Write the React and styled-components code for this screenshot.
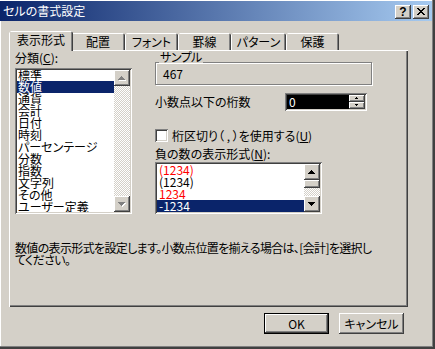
import React from 'react';
import styled, { createGlobalStyle, css } from 'styled-components';

const FACE = '#d4d0c8';
const SHADOW = '#808080';
const DARK = '#404040';
const HILITE = '#ffffff';
const NAVY = '#0a246a';

const raised = css`
  box-shadow: inset -1px -1px ${DARK}, inset 1px 1px ${HILITE},
    inset -2px -2px ${SHADOW}, inset 2px 2px ${FACE};
`;
const sunken = css`
  box-shadow: inset 1px 1px ${SHADOW}, inset -1px -1px ${HILITE},
    inset 2px 2px ${DARK}, inset -2px -2px ${FACE};
`;

const Global = createGlobalStyle`
  html, body { margin: 0; padding: 0; background: ${FACE}; }
  body {
    font-family: "Noto Sans CJK JP", "Noto Sans", sans-serif;
    font-size: 12px;
    line-height: 12px;
    font-feature-settings: "palt";
    color: #000;
  }
  * { box-sizing: border-box; }
  u { text-underline-offset: 1px; }
`;

const Window = styled.div`
  width: 435px;
  height: 349px;
  background: ${FACE};
  display: flex;
  flex-direction: column;
  padding: 1px 3px 0 0;
  box-shadow: inset -2px -2px ${DARK}, inset -3px -3px ${SHADOW}, inset 1px 1px ${HILITE};
`;

const TitleBar = styled.div`
  height: 20px;
  display: flex;
  align-items: center;
  padding: 0 3px 0 3px;
  background: linear-gradient(to right, #0a246a, #a6caf0);
  color: #fff;
`;

const Title = styled.div`
  flex: 1;
  font-size: 12px;
  line-height: 12px;
`;

const CapButton = styled.div`
  width: 16px;
  height: 14px;
  background: ${FACE};
  ${raised};
  display: flex;
  align-items: center;
  justify-content: center;
  margin-left: ${(p) => (p.$gap ? 2 : 0)}px;
  margin-top: 1px;
  color: #000;
  font-family: "Liberation Sans", Arial, sans-serif;
  font-weight: bold;
  font-size: 12px;
  line-height: 12px;
`;

const Body = styled.div`
  flex: 1;
  display: flex;
  flex-direction: column;
  padding: 10px 24px 0 9px;
`;

const TabRow = styled.div`
  display: flex;
  align-items: flex-end;
  height: 20px;
  margin-bottom: -1px;
  padding-left: 2px;
  position: relative;
  z-index: 1;
`;

const Tab = styled.div`
  width: ${(p) => p.$w}px;
  height: ${(p) => (p.$active ? 20 : 17)}px;
  margin: 0 ${(p) => (p.$active ? -2 : 0)}px ${(p) => (p.$active ? 0 : 1)}px;
  padding-bottom: ${(p) => (p.$active ? 2 : 0)}px;
  flex-shrink: 0;
  background: ${FACE};
  display: flex;
  align-items: center;
  justify-content: center;
  box-shadow: inset 1px 1px ${HILITE}, inset -1px 0 ${DARK}, inset -2px 0 ${SHADOW};
  clip-path: polygon(0 2px, 2px 0, calc(100% - 2px) 0, 100% 2px, 100% 100%, 0 100%);
  position: relative;
  z-index: ${(p) => (p.$active ? 2 : 1)};
`;

const Panel = styled.div`
  height: 257px;
  background: ${FACE};
  box-shadow: inset 1px 1px ${HILITE}, inset -1px -1px ${DARK}, inset -2px -2px ${SHADOW};
  padding: 2px 6px;
  display: flex;
  flex-direction: column;
`;

const Top = styled.div`
  display: flex;
`;

const LeftCol = styled.div`
  width: 117px;
  display: flex;
  flex-direction: column;
`;

const RightCol = styled.div`
  margin-left: 23px;
  width: 217px;
  display: flex;
  flex-direction: column;
`;

const Label = styled.div`
  height: 12px;
  line-height: 12px;
  white-space: nowrap;
  margin-top: ${(p) => p.$mt || 0}px;
`;

const ListBox = styled.div`
  width: ${(p) => p.$w}px;
  height: ${(p) => p.$h}px;
  margin-top: ${(p) => p.$mt || 0}px;
  background: #fff;
  ${sunken};
  padding: 2px;
  display: flex;
`;

const Items = styled.div`
  flex: 1;
  overflow: hidden;
`;

const ItemsInner = styled.div`
  margin-top: ${(p) => p.$offset || 0}px;
`;

const Item = styled.div`
  height: 12px;
  line-height: 12px;
  padding-left: ${(p) => p.$pad}px;
  white-space: nowrap;
  background: ${(p) => (p.$selected ? NAVY : 'transparent')};
  color: ${(p) => (p.$selected ? '#fff' : p.$color || '#000')};
`;

const ScrollBar = styled.div`
  width: 16px;
  flex-shrink: 0;
  display: flex;
  flex-direction: column;
`;

const ScrollBtn = styled.div`
  width: 16px;
  height: 16px;
  flex-shrink: 0;
  background: ${FACE};
  ${raised};
  display: flex;
  align-items: center;
  justify-content: center;
`;

const Track = styled.div`
  flex: 1;
  background: repeating-conic-gradient(${FACE} 0 25%, #ffffff 0 50%) 0 0 / 2px 2px;
`;

const Thumb = styled.div`
  height: 8px;
  flex-shrink: 0;
  background: ${FACE};
  ${raised};
`;

const Group = styled.div`
  position: relative;
  margin-top: 10px;
  height: 23px;
  border: 1px solid ${SHADOW};
  box-shadow: inset 1px 1px ${HILITE}, 1px 1px ${HILITE};
  padding: 5px 0 0 7px;
  line-height: 12px;
`;

const GroupLabel = styled.span`
  position: absolute;
  left: 3px;
  top: -12px;
  padding: 0 1px;
  background: ${FACE};
  line-height: 12px;
  letter-spacing: -0.5px;
`;

const SpinRow = styled.div`
  display: flex;
  align-items: center;
  margin-top: 8px;
  height: 18px;
`;

const SpinLabel = styled.div`
  width: 130px;
  white-space: nowrap;
`;

const Spin = styled.div`
  width: 82px;
  height: 18px;
  ${sunken};
  background: ${FACE};
  padding: 2px;
  display: flex;
`;

const SpinField = styled.div`
  flex: 1;
  background: #000;
  color: #fff;
  padding-left: 2px;
  line-height: 14px;
`;

const SpinBtns = styled.div`
  width: 16px;
  display: flex;
  flex-direction: column;
`;

const SpinBtn = styled.div`
  flex: 1;
  background: ${FACE};
  ${raised};
  display: flex;
  align-items: center;
  justify-content: center;
`;

const CheckRow = styled.div`
  display: flex;
  align-items: center;
  margin-top: 18px;
  height: 13px;
`;

const CheckBox = styled.div`
  width: 13px;
  height: 13px;
  background: #fff;
  ${sunken};
  margin-right: 4px;
  flex-shrink: 0;
`;

const Description = styled.div`
  margin-top: 28px;
  line-height: 12px;
  white-space: nowrap;
  letter-spacing: -0.65px;
`;

const ButtonRow = styled.div`
  display: flex;
  justify-content: flex-end;
  gap: 10px;
  padding: 6px 4px 0 0;
`;

const Button = styled.div`
  width: 65px;
  height: 21px;
  background: ${FACE};
  display: flex;
  align-items: center;
  justify-content: center;
  ${(p) =>
    p.$default
      ? css`
          box-shadow: inset 0 0 0 1px #000, inset -2px -2px ${DARK}, inset 2px 2px ${HILITE},
            inset -3px -3px ${SHADOW}, inset 3px 3px ${FACE};
        `
      : raised};
`;

const Arrow = ({ dir = 'up', size = 4, disabled }) => {
  const w = size * 2 - 1;
  const rects = [];
  for (let i = 0; i < size; i++) {
    const y = dir === 'up' ? i : size - 1 - i;
    rects.push(<rect key={i} x={size - 1 - i} y={y} width={2 * i + 1} height={1} />);
  }
  return (
    <svg width={w + 1} height={size + 1} viewBox={`0 0 ${w + 1} ${size + 1}`} shapeRendering="crispEdges">
      {disabled && (
        <g fill="#fff" transform="translate(1,1)">
          {rects}
        </g>
      )}
      <g fill={disabled ? SHADOW : '#000'}>{rects}</g>
    </svg>
  );
};

const CloseGlyph = () => {
  const rows = [
    [0, 2, 6, 2],
    [1, 2, 5, 2],
    [2, 4],
    [3, 2],
    [2, 4],
    [1, 2, 5, 2],
    [0, 2, 6, 2],
  ];
  const rects = [];
  rows.forEach((r, y) => {
    for (let i = 0; i < r.length; i += 2) {
      rects.push(<rect key={`${y}-${i}`} x={r[i]} y={y} width={r[i + 1]} height={1} />);
    }
  });
  return (
    <svg width="8" height="7" viewBox="0 0 8 7" shapeRendering="crispEdges" fill="#000">
      {rects}
    </svg>
  );
};

const categories = [
  '標準',
  '数値',
  '通貨',
  '会計',
  '日付',
  '時刻',
  'パーセンテージ',
  '分数',
  '指数',
  '文字列',
  'その他',
  'ユーザー定義',
];

const negatives = [
  { t: '(1234)', c: '#ff0000' },
  { t: '(1234)', c: '#000' },
  { t: '1234', c: '#ff0000' },
  { t: '-1234', c: '#000', sel: true },
];

const tabs = [
  { t: '表示形式', w: 64, active: true },
  { t: '配置', w: 54 },
  { t: 'フォント', w: 53 },
  { t: '罫線', w: 53 },
  { t: 'パターン', w: 55 },
  { t: '保護', w: 53 },
];

export default function App() {
  return (
    <>
      <Global />
      <Window>
        <TitleBar>
          <Title>セルの書式設定</Title>
          <CapButton>?</CapButton>
          <CapButton $gap>
            <CloseGlyph />
          </CapButton>
        </TitleBar>
        <Body>
          <TabRow>
            {tabs.map((t) => (
              <Tab key={t.t} $w={t.w} $active={t.active}>
                {t.t}
              </Tab>
            ))}
          </TabRow>
          <Panel>
            <Top>
              <LeftCol>
                <Label>
                  分類(<u>C</u>):
                </Label>
                <ListBox $w={117} $h={146} $mt={4}>
                  <Items>
                    <ItemsInner $offset={-1}>
                      {categories.map((c, i) => (
                        <Item key={c} $pad={1} $selected={i === 1}>
                          {c}
                        </Item>
                      ))}
                    </ItemsInner>
                  </Items>
                  <ScrollBar>
                    <ScrollBtn>
                      <Arrow dir="up" disabled />
                    </ScrollBtn>
                    <Track />
                    <ScrollBtn>
                      <Arrow dir="down" disabled />
                    </ScrollBtn>
                  </ScrollBar>
                </ListBox>
              </LeftCol>
              <RightCol>
                <Group>
                  <GroupLabel>サンプル</GroupLabel>
                  467
                </Group>
                <SpinRow>
                  <SpinLabel>小数点以下の桁数</SpinLabel>
                  <Spin>
                    <SpinField>0</SpinField>
                    <SpinBtns>
                      <SpinBtn>
                        <Arrow dir="up" size={2} />
                      </SpinBtn>
                      <SpinBtn>
                        <Arrow dir="down" size={2} />
                      </SpinBtn>
                    </SpinBtns>
                  </Spin>
                </SpinRow>
                <CheckRow>
                  <CheckBox />
                  <span>
                    桁区切り（ , ）を使用する(<u>U</u>)
                  </span>
                </CheckRow>
                <Label $mt={6}>
                  負の数の表示形式(<u>N</u>):
                </Label>
                <ListBox $w={167} $h={52} $mt={2}>
                  <Items>
                    <ItemsInner>
                      {negatives.map((n, i) => (
                        <Item key={i} $pad={2} $color={n.c} $selected={n.sel}>
                          {n.t}
                        </Item>
                      ))}
                    </ItemsInner>
                  </Items>
                  <ScrollBar>
                    <ScrollBtn>
                      <Arrow dir="up" />
                    </ScrollBtn>
                    <Thumb />
                    <Track />
                    <ScrollBtn>
                      <Arrow dir="down" />
                    </ScrollBtn>
                  </ScrollBar>
                </ListBox>
              </RightCol>
            </Top>
            <Description>
              数値の表示形式を設定します。小数点位置を揃える場合は、[会計]を選択し
              <br />
              てください。
            </Description>
          </Panel>
          <ButtonRow>
            <Button $default>OK</Button>
            <Button>キャンセル</Button>
          </ButtonRow>
        </Body>
      </Window>
    </>
  );
}
